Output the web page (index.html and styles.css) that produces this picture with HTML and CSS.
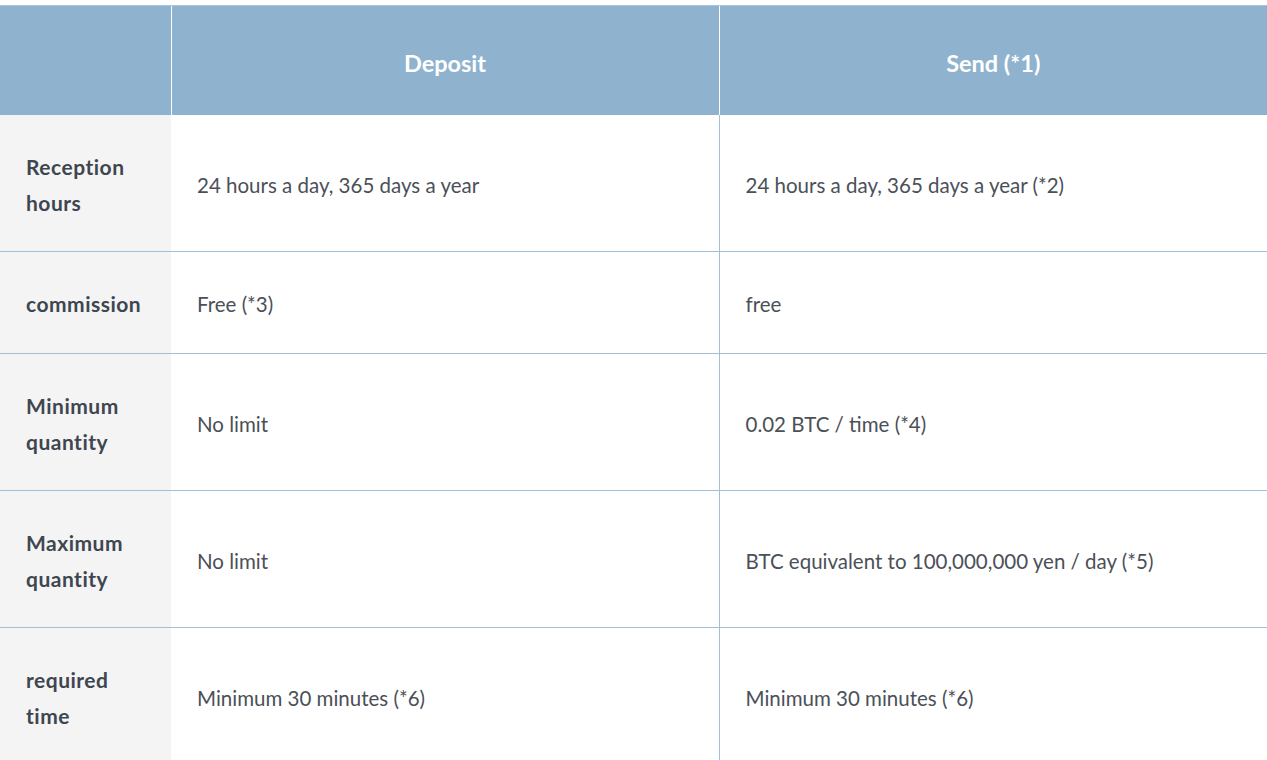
FILE: index.html
```html
<!DOCTYPE html>
<html lang="en">
<head>
<meta charset="utf-8">
<title>Deposit and Send</title>
<link rel="stylesheet" href="styles.css">
</head>
<body>
<table class="spec">
  <colgroup>
    <col class="c-label">
    <col class="c-dep">
    <col class="c-send">
  </colgroup>
  <thead>
    <tr>
      <th class="corner"></th>
      <th>Deposit</th>
      <th>Send (*1)</th>
    </tr>
  </thead>
  <tbody>
    <tr class="r1">
      <th>Reception<br>hours</th>
      <td>24 hours a day, 365 days a year</td>
      <td>24 hours a day, 365 days a year (*2)</td>
    </tr>
    <tr class="r2">
      <th>commission</th>
      <td>Free (*3)</td>
      <td>free</td>
    </tr>
    <tr class="r3">
      <th>Minimum<br>quantity</th>
      <td>No limit</td>
      <td>0.02 BTC / time (*4)</td>
    </tr>
    <tr class="r4">
      <th>Maximum<br>quantity</th>
      <td>No limit</td>
      <td>BTC equivalent to 100,000,000 yen / day (*5)</td>
    </tr>
    <tr class="r5">
      <th>required<br>time</th>
      <td>Minimum 30 minutes (*6)</td>
      <td>Minimum 30 minutes (*6)</td>
    </tr>
  </tbody>
</table>
</body>
</html>
```
FILE: styles.css
```css
html, body {
  margin: 0;
  padding: 0;
  background: #ffffff;
}
body {
  font-family: "Lato", "Open Sans", sans-serif;
  padding-top: 5px;
}
.spec {
  width: 1267px;
  border-collapse: collapse;
  table-layout: fixed;
  font-size: 20.5px;
  line-height: 36px;
  color: #4b5058;
}
.c-label { width: 171px; }
.c-dep { width: 548px; }
.c-send { width: 548px; }

.spec thead th {
  background: #8fb2ce;
  color: #ffffff;
  font-weight: 700;
  font-size: 23.5px;
  height: 105px;
  padding: 4px 0 0 0;
  text-align: center;
  vertical-align: middle;
  border-left: 1px solid #ffffff;
  border-top: 1px solid #a9c3d9;
}
.spec thead th.corner { border-left: none; }

.spec tbody th {
  background: #f4f4f5;
  color: #3e4650;
  font-weight: 700;
  font-size: 21px;
  letter-spacing: 0.5px;
  text-align: left;
  padding: 4px 0 0 26px;
  vertical-align: middle;
}
.spec tbody td {
  padding: 4px 0 0 26px;
  vertical-align: middle;
  border-left: 1px solid #a3bfd8;
}
.spec tbody td:nth-child(2) { border-left: none; }
.spec tbody tr { border-bottom: 1px solid #a3bfd8; }
.spec tbody tr.r5 { border-bottom: none; }

.r1 { height: 136px; }
.r2 { height: 102px; }
.r3 { height: 137px; }
.r4 { height: 137px; }
.r5 { height: 137px; }
```
